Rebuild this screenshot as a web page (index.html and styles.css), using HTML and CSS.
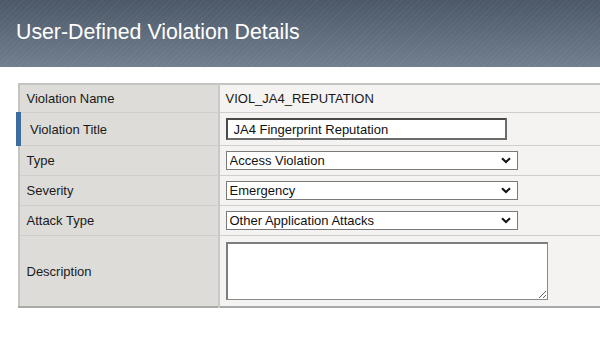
FILE: index.html
```html
<!DOCTYPE html>
<html lang="en">
    <head>
    <meta charset="utf-8">
    <title>User-Defined Violation Details</title>
    <link rel="stylesheet" href="styles.css">
    </head>
    <body>
        <div class="page-header">
            <h1>User-Defined Violation Details</h1>
        </div>

        <div class="content">
        <table class="details">
            <tr>
                <td class="label">Violation Name</td>
                <td class="value">VIOL_JA4_REPUTATION</td>
            </tr>
            <tr class="active">
                <td class="label">Violation Title</td>
                <td class="value"><input type="text" class="title-field" value="JA4 Fingerprint Reputation"></td>
            </tr>
            <tr>
                <td class="label">Type</td>
                <td class="value">
                    <div class="select-wrap">
                        <select><option>Access Violation</option></select>
                        <svg class="chevron" width="10" height="7" viewBox="0 0 10 7"><path d="M1 1.2 L5 5 L9 1.2" fill="none" stroke="#111" stroke-width="2"/></svg>
                    </div>
                </td>
            </tr>
            <tr>
                <td class="label">Severity</td>
                <td class="value">
                    <div class="select-wrap">
                        <select><option>Emergency</option></select>
                        <svg class="chevron" width="10" height="7" viewBox="0 0 10 7"><path d="M1 1.2 L5 5 L9 1.2" fill="none" stroke="#111" stroke-width="2"/></svg>
                    </div>
                </td>
            </tr>
            <tr>
                <td class="label">Attack Type</td>
                <td class="value">
                    <div class="select-wrap">
                        <select><option>Other Application Attacks</option></select>
                        <svg class="chevron" width="10" height="7" viewBox="0 0 10 7"><path d="M1 1.2 L5 5 L9 1.2" fill="none" stroke="#111" stroke-width="2"/></svg>
                    </div>
                </td>
            </tr>
            <tr class="tall">
                <td class="label">Description</td>
                <td class="value"><textarea class="desc-field"></textarea></td>
            </tr>
        </table>
        </div>
    </body>
</html>
```

FILE: styles.css
```css
html, body {
    margin: 0;
    padding: 0;
    font-family: "Liberation Sans", Arial, sans-serif;
    background: #ffffff;
    overflow: hidden;
}

.page-header {
    height: 67px;
    background-color: #5e6b7b;
    background-image:
        repeating-linear-gradient(135deg, rgba(255,255,255,0.035) 0 1px, rgba(255,255,255,0) 1px 4px),
        linear-gradient(to bottom, #4c5867, #717f8f);
    display: flex;
    align-items: center;
}

.page-header h1 {
    margin: 0 0 0 16px;
    padding-bottom: 2px;
    font-size: 21.3px;
    font-weight: normal;
    color: #ffffff;
}

.content {
    padding: 16px 0 0 16px;
}

.details {
    width: 100%;
    border-collapse: collapse;
    border-top: 2px solid #c4c4c2;
    border-left: 2px solid #c4c4c2;
    border-bottom: 2px solid #a9a9a7;
    font-size: 13px;
    color: #1a1a1a;
}

.details td {
    border-bottom: 1px solid #cfcecb;
    padding: 0;
    height: 29px;
    vertical-align: middle;
}

.details .label {
    width: 191px;
    padding-left: 7px;
    background: #dddcd8;
    border-right: 2px solid #c8c8c6;
}

.details .value {
    padding-left: 6px;
    background: #f4f3f1;
}

.details tr:first-child td {
    height: 27px;
}

.details tr.active td {
    height: 32px;
}

.details tr.active .label {
    border-left: 5px solid #3d6d9f;
    padding-left: 9px;
    width: 180px;
}

.details tr.tall td {
    height: 58px;
    padding-top: 6px;
    padding-bottom: 6px;
}

.title-field {
    box-sizing: border-box;
    width: 281px;
    height: 22px;
    margin: 0;
    padding: 1px 6px 0;
    border: 2px solid #4a4a4a;
    border-right-color: #6c6c6c;
    border-bottom-color: #6c6c6c;
    background: #ffffff;
    font-family: "Liberation Sans", Arial, sans-serif;
    font-size: 13px;
    color: #111;
    outline: none;
}

.select-wrap {
    position: relative;
    width: 292px;
    height: 19px;
}

.select-wrap select {
    -webkit-appearance: none;
    appearance: none;
    box-sizing: border-box;
    width: 292px;
    height: 19px;
    margin: 0;
    padding: 0 0 0 3px;
    border: 1px solid #7a7a7a;
    border-radius: 0;
    background: #ffffff;
    font-family: "Liberation Sans", Arial, sans-serif;
    font-size: 13px;
    color: #111;
}

.chevron {
    position: absolute;
    right: 7px;
    top: 6px;
    pointer-events: none;
}

.desc-field {
    box-sizing: border-box;
    display: block;
    width: 322px;
    height: 58px;
    margin: 0;
    border: 1px solid #8a8a8a;
    border-top: 2px solid #7d7d7d;
    border-left: 2px solid #7d7d7d;
    background: #ffffff;
}
```
